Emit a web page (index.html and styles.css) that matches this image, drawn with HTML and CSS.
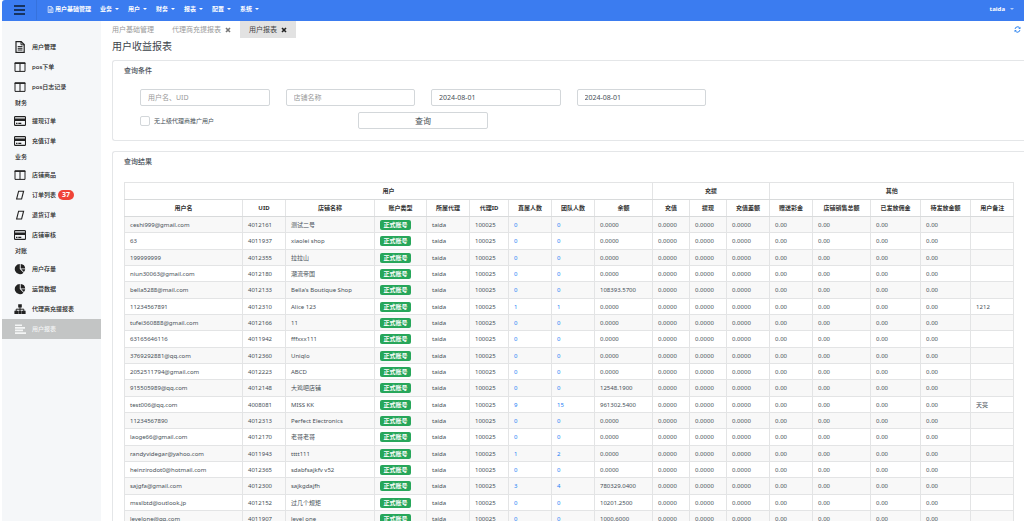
FILE: index.html
```html
<!DOCTYPE html>
<html lang="zh-CN">
<head>
<meta charset="utf-8">
<title>用户收益报表</title>
<link rel="stylesheet" href="styles.css">
</head>
<body>
<svg class="sprite" aria-hidden="true">
  <symbol id="i-doc" viewBox="0 0 10 12"><path d="M1 .7h5.2L9.2 3.6v7.7H1z" fill="none" stroke="currentColor" stroke-width="1.2"/><path d="M6 .7v3.1h3.2M2.7 5.6h4.8M2.7 7.3h4.8M2.7 9h4.8" fill="none" stroke="currentColor" stroke-width="1"/></symbol>
  <symbol id="i-cols" viewBox="0 0 12 12"><path d="M1 2h10v8.4H1zM6 2v8.4" fill="none" stroke="currentColor" stroke-width="1"/><path d="M.6 1.4h10.8v1.5H.6z" fill="currentColor"/></symbol>
  <symbol id="i-card" viewBox="0 0 12 10"><rect x=".5" y=".6" width="11" height="8.8" rx=".8" fill="none" stroke="currentColor" stroke-width="1.1"/><path d="M.5 2.4h11v2.6H.5zM2 6.8h1.5v1.1H2zM4.3 6.8h3v1.1h-3z" fill="currentColor"/></symbol>
  <symbol id="i-slant" viewBox="0 0 12 12"><path d="M4.6 2.2h5L7.6 10h-5z" fill="none" stroke="currentColor" stroke-width="1.1"/></symbol>
  <symbol id="i-pie" viewBox="0 0 12 12"><path d="M5.8 1v5.1l3.7 3.6A5.1 5.1 0 1 1 5.8 1z" fill="currentColor"/><path d="M6.7.9a4.8 4.8 0 0 1 4.5 4.5H6.7zM7.2 6.2h4a5 5 0 0 1-1.3 2.8z" fill="currentColor"/></symbol>
  <symbol id="i-tree" viewBox="0 0 12 12"><path d="M4.2 1.2h3.6v3.3H4.2zM.4 7.8H4v3.3H.4zM4.3 7.8h3.4v3.3H4.3zM8 7.8h3.6v3.3H8z" fill="currentColor"/><path d="M6 4v4M2.2 8V6.2h7.6V8" fill="none" stroke="currentColor" stroke-width="1"/></symbol>
  <symbol id="i-lines" viewBox="0 0 12 12"><path d="M1 1.4h7v1.7H1zM1 4h10v1.7H1zM1 6.6h8v1.7H1zM1 9.2h11v1.7H1z" fill="currentColor"/></symbol>
  <symbol id="i-x" viewBox="0 0 6 6"><path d="M1 1l4 4M5 1L1 5" stroke="currentColor" stroke-width="1.6" fill="none"/></symbol>
  <symbol id="i-refresh" viewBox="0 0 8 8"><path d="M1.2 3.4A2.9 2.9 0 0 1 6.3 2M6.8 4.6A2.9 2.9 0 0 1 1.7 6" fill="none" stroke="currentColor" stroke-width="1.2"/><path d="M7.4.8v2.6H4.8zM.6 7.2V4.6h2.6z" fill="currentColor"/></symbol>
</svg>

<header class="topbar">
  <button class="menu-toggle" type="button" aria-label="菜单"><span></span><span></span><span></span></button>
  <nav class="topnav">
    <a class="topnav-item topnav-home" href="#"><svg class="icon-tiny"><use href="#i-doc"/></svg>用户基础管理</a>
    <button class="topnav-item caret" type="button">业务</button>
    <button class="topnav-item caret" type="button">用户</button>
    <button class="topnav-item caret" type="button">财务</button>
    <button class="topnav-item caret" type="button">报表</button>
    <button class="topnav-item caret" type="button">配置</button>
    <button class="topnav-item caret" type="button">系统</button>
  </nav>
  <button class="topnav-item caret user" type="button">taida</button>
</header>

<div class="shell">
  <nav class="sidebar">
    <a class="side-item" href="#"><svg class="icon"><use href="#i-doc"/></svg>用户管理</a>
    <a class="side-item" href="#"><svg class="icon"><use href="#i-cols"/></svg>pos下单</a>
    <a class="side-item" href="#"><svg class="icon"><use href="#i-cols"/></svg>pos日志记录</a>
    <h2 class="side-label">财务</h2>
    <a class="side-item" href="#"><svg class="icon"><use href="#i-card"/></svg>提现订单</a>
    <a class="side-item" href="#"><svg class="icon"><use href="#i-card"/></svg>充值订单</a>
    <h2 class="side-label">业务</h2>
    <a class="side-item" href="#"><svg class="icon"><use href="#i-cols"/></svg>店铺商品</a>
    <a class="side-item" href="#"><svg class="icon"><use href="#i-slant"/></svg>订单列表<span class="count">37</span></a>
    <a class="side-item" href="#"><svg class="icon"><use href="#i-slant"/></svg>退货订单</a>
    <a class="side-item" href="#"><svg class="icon"><use href="#i-card"/></svg>店铺审核</a>
    <h2 class="side-label">对账</h2>
    <a class="side-item" href="#"><svg class="icon"><use href="#i-pie"/></svg>用户存量</a>
    <a class="side-item" href="#"><svg class="icon"><use href="#i-pie"/></svg>运营数据</a>
    <a class="side-item" href="#"><svg class="icon"><use href="#i-tree"/></svg>代理商充提报表</a>
    <a class="side-item active" href="#"><svg class="icon"><use href="#i-lines"/></svg>用户报表</a>
  </nav>

  <main class="content">
    <div class="tabs">
      <a class="tab" href="#">用户基础管理</a>
      <a class="tab" href="#">代理商充提报表<svg class="icon-close"><use href="#i-x"/></svg></a>
      <a class="tab current" href="#">用户报表<svg class="icon-close"><use href="#i-x"/></svg></a>
      <button class="refresh" type="button" aria-label="刷新"><svg class="icon-tiny"><use href="#i-refresh"/></svg></button>
    </div>
    <h1 class="title">用户收益报表</h1>

    <section class="panel">
      <h2 class="panel-title">查询条件</h2>
      <form class="filters">
        <input class="field" type="text" placeholder="用户名、UID" aria-label="用户名、UID">
        <input class="field" type="text" placeholder="店铺名称" aria-label="店铺名称">
        <input class="field" type="text" value="2024-08-01" aria-label="开始日期">
        <input class="field" type="text" value="2024-08-01" aria-label="结束日期">
        <label class="check"><input type="checkbox">无上级代理商推广用户</label>
        <button class="search" type="button">查询</button>
      </form>
    </section>

    <section class="panel">
      <h2 class="panel-title">查询结果</h2>
      <table class="report">
        <colgroup>
          <col class="w118"><col class="w43"><col class="w89"><col class="w52"><col class="w43"><col class="w39"><col class="w43"><col class="w43"><col class="w58"><col class="w37"><col class="w37"><col class="w43"><col class="w43"><col class="w58"><col class="w50"><col class="w50"><col class="w43">
        </colgroup>
        <thead>
          <tr><th colspan="9">用户</th><th colspan="3">充提</th><th colspan="5">其他</th></tr>
          <tr><th>用户名</th><th>UID</th><th>店铺名称</th><th>账户类型</th><th>所属代理</th><th>代理ID</th><th>直属人数</th><th>团队人数</th><th>余额</th><th>充值</th><th>提现</th><th>充值差额</th><th>赠送彩金</th><th>店铺销售总额</th><th>已发放佣金</th><th>待发放金额</th><th>用户备注</th></tr>
        </thead>
        <tbody id="rows"></tbody>
      </table>
    </section>
  </main>
</div>
<script src="report.js"></script>
</body>
</html>
```
FILE: styles.css
```css
* { box-sizing: border-box; }

body {
  margin: 0;
  padding-left: 2px;
  height: 100vh;
  overflow: hidden;
  display: flex;
  flex-direction: column;
  background: #fff;
  color: #474f57;
  font: 6px/10px "Noto Sans", "Noto Sans CJK SC", sans-serif;
}

button, input { font: inherit; color: inherit; margin: 0; }
button { border: 0; padding: 0; background: none; cursor: pointer; }
a { color: inherit; text-decoration: none; }
h1, h2 { margin: 0; }
.sprite { display: none; }

.topbar {
  flex: none;
  display: flex;
  align-items: flex-start;
  height: 21px;
  padding-right: 10px;
  background: #3b7cf0;
  border-top-left-radius: 3px;
  color: #fff;
}
.menu-toggle {
  display: flex;
  flex-direction: column;
  align-items: center;
  justify-content: center;
  gap: 2px;
  width: 35px;
  height: 20px;
  border-right: 1px solid #3672dc;
}
.menu-toggle span { width: 11px; height: 2px; background: #17335f; }
.topnav { flex: 1; display: flex; gap: 9px; padding-left: 10px; }
.topnav-item {
  display: flex;
  align-items: center;
  height: 18px;
  font-weight: 700;
  white-space: nowrap;
}
.icon-tiny { width: 7px; height: 7px; }
.topnav-home .icon-tiny { margin-right: 1px; }
.caret::after {
  content: "";
  margin-left: 3px;
  border: 2px solid transparent;
  border-top-color: currentColor;
  border-bottom: 0;
}
.user::after { opacity: .6; margin-left: 5px; }

.shell { flex: 1; display: flex; min-height: 0; }

.sidebar {
  flex: none;
  width: 99px;
  padding-top: 16px;
  background: #f5f7f9;
  color: #222;
  font-weight: 500;
}
.side-item {
  display: flex;
  align-items: center;
  height: 20px;
  padding-left: 12px;
  white-space: nowrap;
}
.icon { width: 12px; height: 12px; margin-right: 6px; }
.side-label {
  height: 14px;
  padding: 0 0 0 13px;
  font-size: 6px;
  line-height: 12px;
  font-weight: 500;
}
.side-item.active { background: #c3c5c5; color: #f4f5f5; }
.count {
  margin-left: 2px;
  padding: 0 4px;
  border-radius: 5px;
  background: #f04438;
  color: #fff;
  font-size: 7px;
  font-weight: 700;
}

.content { flex: 1; min-width: 0; padding-left: 11px; }
.tabs { display: flex; height: 17px; font-size: 7px; color: #999; }
.tab { display: flex; align-items: center; padding: 0 9px; white-space: nowrap; }
.tab:first-child { padding-left: 0; }
.icon-close { width: 6px; height: 6px; margin-left: 4px; color: #777; }
.tab.current { background: #e2e2e2; color: #444; }
.tab.current .icon-close { color: #222; }
.refresh { display: flex; align-items: center; margin-left: auto; padding-right: 3px; color: #3b8cf0; }
.title { height: 22px; color: #3c434a; font-size: 10px; line-height: 16px; font-weight: 400; }

.panel {
  margin-bottom: 10px;
  padding: 4px 10px 11px 11px;
  border: 1px solid #e4e6e8;
  border-right: 0;
  border-radius: 3px 0 0 3px;
}
.panel-title { color: #4a525a; font-size: 7px; line-height: 12px; font-weight: 500; }

.filters {
  display: grid;
  grid-template-columns: repeat(12, 1fr);
  gap: 6px 16px;
  padding: 12px 17px 0 16px;
}
.field {
  grid-column: span 2;
  width: 100%;
  height: 17px;
  padding: 0 7px;
  border: 1px solid #d3d7da;
  border-radius: 2px;
  background: #fff;
  font-size: 7px;
}
.field::placeholder { color: #999; opacity: 1; }
.check { grid-column: 1 / span 3; display: flex; align-items: center; gap: 4px; }
.check input {
  appearance: none;
  width: 10px;
  height: 10px;
  border: 1px solid #d3d7da;
  border-radius: 2px;
}
.search {
  grid-column: 4 / span 2;
  height: 17px;
  border: 1px solid #d3d7da;
  border-radius: 2px;
  font-size: 8px;
}

.report {
  width: 100%;
  margin-top: 14px;
  table-layout: fixed;
  border-collapse: collapse;
}
.report th, .report td {
  height: 16px;
  padding: 0 5px;
  border: 1px solid #e3e4e5;
  text-align: left;
  white-space: nowrap;
}
.report th { height: 17px; padding: 0; color: #333; font-weight: 700; text-align: center; border-bottom-color: #d8dadb; }
.report tbody tr:nth-child(odd) { background: #f8f8f8; }
.report tbody tr:nth-child(3n+2) td { height: 17px; }
.report a { color: #1a80f5; }
.tag {
  display: block;
  width: 31px;
  border-radius: 2px;
  background: #27a65a;
  color: #fff;
  font-weight: 700;
  text-align: center;
}
.w118 { width: 118px; }
.w89 { width: 89px; }
.w58 { width: 58px; }
.w52 { width: 52px; }
.w50 { width: 50px; }
.w43 { width: 43px; }
.w39 { width: 39px; }
.w37 { width: 37px; }
```
FILE: report.js
```js
// name, uid, shop, balance, direct count, team count, remark
const users = [
  ["ceshi999@gmail.com", "4012161", "测试二号"],
  ["63", "4011937", "xiaolei shop"],
  ["199999999", "4012355", "拉拉山"],
  ["niun30063@gmail.com", "4012180", "潮流帝国"],
  ["bella5288@mail.com", "4012133", "Bella's Boutique Shop", "108393.5700"],
  ["11234567891", "4012310", "Alice 123", "0.0000", 1, 1, "1212"],
  ["tufei360888@gmail.com", "4012166", "11"],
  ["63165646116", "4011942", "fffxxx111"],
  ["3769292881@qq.com", "4012360", "Uniqlo"],
  ["2052511794@gmail.com", "4012223", "ABCD"],
  ["915505989@qq.com", "4012148", "大鸡吧店铺", "12548.1900"],
  ["test006@qq.com", "4008081", "MISS KK", "961302.5400", 9, 15, "天亮"],
  ["11234567890", "4012313", "Perfect Electronics"],
  ["laoge66@gmail.com", "4012170", "老哥老哥"],
  ["randyvidegar@yahoo.com", "4011943", "tttt111", "0.0000", 1, 2],
  ["heinzirodot0@hotmail.com", "4012365", "sdabfsajkfv v52"],
  ["sajgfa@gmail.com", "4012300", "sajkgdajfh", "780329.0400", 3, 4],
  ["msslbtd@outlook.jp", "4012152", "过几个规矩", "10201.2500"],
  ["levelone@qq.com", "4011907", "level one", "1000.6000"]
];

const link = n => `<a href="#">${n}</a>`;

document.getElementById("rows").innerHTML = users.map(
  ([name, uid, shop, balance = "0.0000", direct = 0, team = 0, remark = ""]) => {
    const cells = [
      name, uid, shop, '<span class="tag">正式账号</span>', "taida", "100025",
      link(direct), link(team), balance,
      "0.0000", "0.0000", "0.0000", "0.00", "0.00", "0.00", "0.00", remark
    ];
    return `<tr>${cells.map(c => `<td>${c}</td>`).join("")}</tr>`;
  }
).join("");
```
